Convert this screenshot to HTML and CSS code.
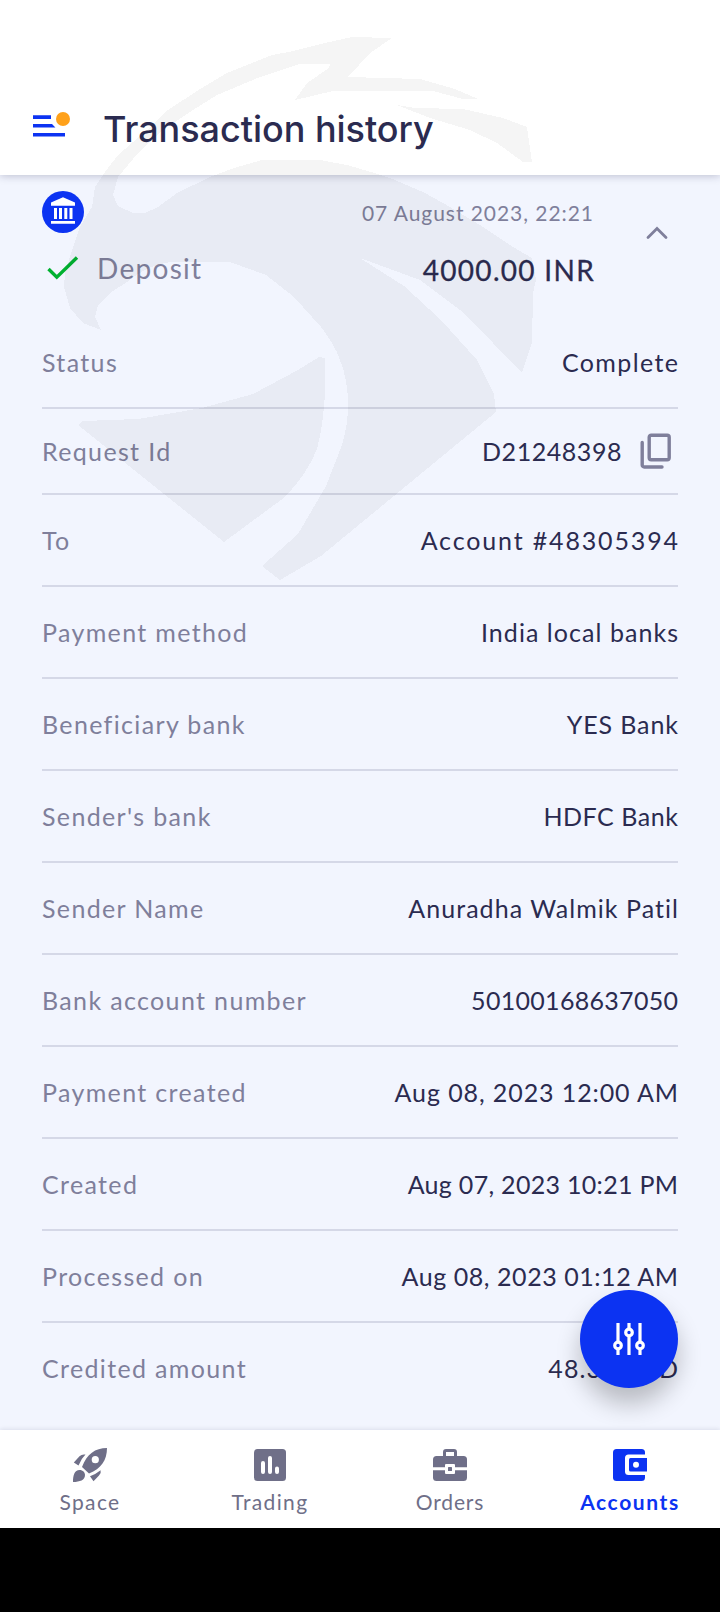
FILE: index.html
```html
<!DOCTYPE html>
<html lang="en">
<head>
<meta charset="utf-8">
<title>Transaction history</title>
<link rel="stylesheet" href="styles.css">
</head>
<body>
<div class="screen">
  <header class="header">
    <svg class="menu" width="40" height="32" viewBox="0 0 40 32">
      <path d="M0 5.300h18v3.600H0zM0 14h19l3.400 3.600H0zM0 23h32v3.600H0z" fill="#0c33f2"/>
      <circle cx="30" cy="9" r="7" fill="#ffa11a"/>
    </svg>
    <h1 class="title">Transaction history</h1>
  </header>
  <main class="content">
    <section class="summary">
      <div class="kind">
        <svg class="bank" width="42" height="42" viewBox="0 0 42 42">
          <circle cx="21" cy="21" r="21" fill="#0c33f2"/>
          <path d="M21 6.300l12 5.200v3.200H9v-3.200zM12 17h3v11h-3zM17 17h3v11h-3zM22.300 17h3v11h-3zM27.500 17h3v11h-3zM9 30h24v2.800H9z" fill="#fff"/>
        </svg>
        <div class="type">
          <svg class="check" width="32" height="24" viewBox="0 0 32 24"><path d="M1.500 13l8.300 8.200L30 1.500" fill="none" stroke="#00b130" stroke-width="3.400"/></svg>
          <span class="deposit">Deposit</span>
        </div>
      </div>
      <div class="figures">
        <span class="date">07 August 2023, 22:21</span>
        <span class="amount">4000.00 INR</span>
      </div>
      <svg class="chevron" width="22" height="14" viewBox="0 0 22 14"><path d="M2 11.500l9-9 9 9" fill="none" stroke="#7f7f9b" stroke-width="2.800" stroke-linecap="round"/></svg>
    </section>
    <dl class="details">
      <div class="row"><dt>Status</dt><dd class="loose">Complete</dd></div>
      <div class="row short"><dt>Request Id</dt><dd class="id">D21248398
        <svg class="copy" width="32" height="38" viewBox="0 0 32 38" fill="none" stroke="#7f7f9b" stroke-width="3.400" stroke-linecap="round" stroke-linejoin="round"><rect x="9.200" y="3.200" width="20" height="24.600" rx="2"/><path d="M2.200 10.500V33a2 2 0 0 0 2 2H22"/></svg></dd></div>
      <div class="row"><dt>To</dt><dd class="looser">Account #48305394</dd></div>
      <div class="row"><dt>Payment method</dt><dd class="open">India local banks</dd></div>
      <div class="row"><dt>Beneficiary bank</dt><dd class="relaxed">YES Bank</dd></div>
      <div class="row"><dt>Sender's bank</dt><dd>HDFC Bank</dd></div>
      <div class="row"><dt>Sender Name</dt><dd class="open">Anuradha Walmik Patil</dd></div>
      <div class="row"><dt>Bank account number</dt><dd class="snug">50100168637050</dd></div>
      <div class="row"><dt>Payment created</dt><dd class="relaxed">Aug 08, 2023 12:00 AM</dd></div>
      <div class="row"><dt>Created</dt><dd class="snug">Aug 07, 2023 10:21 PM</dd></div>
      <div class="row"><dt>Processed on</dt><dd>Aug 08, 2023 01:12 AM</dd></div>
      <div class="row last"><dt>Credited amount</dt><dd class="open">48.31 USD</dd></div>
    </dl>
  </main>
  <nav class="tabs">
    <a class="tab"><svg width="34" height="34" viewBox="0 0 34 34" fill="#6f6f88"><path fill-rule="evenodd" d="M34 0C22 0 14 6 9 19l7 6.500C28 21 34 12 34 0zM22.300 8.100a3.600 3.600 0 1 1 0 7.200 3.600 3.600 0 0 1 0-7.200z"/><path d="M12.500 6.600Q9 5.800 6.500 8.300L.8 14.500 5.500 17.500Q8 11 12.500 6.600zM27.600 22.200Q28.500 25 26 27.500L20.500 33.300 17 28.200Q23 26 27.600 22.200zM0 34c0-7 1.500-12 6.500-12 3.500 0 5.500 2.500 5.500 5 0 5-5 7-12 7z"/></svg><span>Space</span></a>
    <a class="tab"><svg width="34" height="34" viewBox="0 0 34 34"><rect x="1" y="1" width="32" height="32" rx="3.500" fill="#6f6f88"/><path d="M10 15v9M17 10v14M24 20.500V24" stroke="#fff" stroke-width="4" stroke-linecap="round"/></svg><span>Trading</span></a>
    <a class="tab orders"><svg width="34" height="34" viewBox="0 0 34 34"><path d="M11.500 9V4q0-1.500 1.500-1.500h8q1.500 0 1.500 1.500v5" fill="none" stroke="#6f6f88" stroke-width="3"/><rect y="8" width="34" height="25" rx="3.500" fill="#6f6f88"/><path d="M0 19.300h34v3H0z" fill="#fff"/><rect x="12" y="16" width="10" height="10" rx="1" fill="#fff"/><rect x="15" y="19" width="4" height="4" rx=".6" fill="#6f6f88"/></svg><span>Orders</span></a>
    <a class="tab active"><svg width="34" height="34" viewBox="0 0 34 34"><rect y="1" width="32" height="32" rx="3.500" fill="#0c33f2"/><path d="M34 6.500H15.500q-3.500 0-3.500 3.500v13.500q0 3.500 3.500 3.500H34z" fill="#fff"/><path d="M34 10H17.500q-1.500 0-1.500 1.500v10.500q0 1.500 1.500 1.500H34z" fill="#0c33f2"/><circle cx="23" cy="16.800" r="3" fill="#fff"/></svg><span>Accounts</span></a>
  </nav>
  <div class="system-bar"></div>

  <svg class="watermark" width="720" height="600" viewBox="0 0 720 600" shape-rendering="crispEdges">
    <path d="M392 38L352 37 325 43 289 52 272 55 227 73 197 91 168 110 147 130 118 155 105 172 95 187 92 207 80 227 73 247 65 273 64 287 70 308 83 323 101 330 95 317 98 305 110 293 127 282Q150 263 174 262H230L266 275 294 297 321 327Q335 345 340 360 348 380 348 405 348 425 342 445L326 486 298 534 262 566 280 580 321 556 496 412 494 394 477 360 441 320 404 286 360 258 420 280 460 310 493 343 522 373 532 343 533 293 536 280 532 258 513 247 483 227 450 207 425 193 395 180 378 174 347 165 320 160H262L234 168 210 177 177 193 158 207 145 213H133L118 206 113 195 118 177 138 153 163 130 193 110 217 95 260 77 300 64H330L329 68 307 83 295 100 333 91H433L463 99H478L455 89 420 79 348 77 370 53Z"/>
    <path d="M397 105L415 108 463 109 503 118 527 127 532 162H523L497 143 470 130 430 118Z"/>
    <path d="M325 358V383Q325 418 317 449 307 474 285 497L224 542 154 486 78 425 83 421 138 419 202 408 253 394 298 370 319 357Z"/>
  </svg>
  <button class="fab"><svg width="34" height="34" viewBox="0 0 34 34" fill="none" stroke="#fff" stroke-width="3.200"><path d="M6 1v18M6 26v7M17 1v5M17 14v19M28 1v18M28 26v7"/><circle cx="6" cy="23.500" r="3.300"/><circle cx="17" cy="10.500" r="3.300"/><circle cx="28" cy="23.500" r="3.300"/></svg></button>
</div>
</body>
</html>
```
FILE: styles.css
```css
* { box-sizing: border-box; }
body { margin: 0; font-family: Lato, "Open Sans", sans-serif; color: #2b2b50; }
.screen { position: relative; width: 720px; height: 1612px; overflow: hidden; display: flex; flex-direction: column; background: #f2f5fe; }
.header { height: 175px; flex: none; padding: 110px 33px 0; display: flex; align-items: flex-start; gap: 30px; background: #fff; box-shadow: 0 1px 8px rgba(30, 30, 70, .25); }
.title { margin: -4px 0 0; font-family: Inter, sans-serif; font-size: 36px; line-height: 46px; font-weight: 500; letter-spacing: -.03px; white-space: nowrap; }
.content { height: 1255px; flex: none; padding: 0 42px; }
.summary { height: 142px; display: flex; }
.kind { width: 220px; padding-top: 16px; display: flex; flex-direction: column; gap: 15px; }
.type { display: flex; align-items: center; gap: 18px; padding-left: 5px; color: #7f7f9b; }
.deposit { font-size: 28px; line-height: 40px; letter-spacing: 1.3px; }
.figures { width: 332px; padding-top: 23px; display: flex; flex-direction: column; align-items: flex-end; white-space: nowrap; }
.date { font-size: 21px; line-height: 30px; letter-spacing: .95px; color: #7f7f9b; }
.amount { font-size: 28px; line-height: 40px; margin-top: 22px; margin-right: -1px; letter-spacing: 1.3px; -webkit-text-stroke: .3px; }
.chevron { margin: 51px 0 0 52px; }
.details { margin: 0; }
.row { height: 92px; display: flex; justify-content: space-between; align-items: center; border-bottom: 2px solid #d5d8e7; font-size: 25px; white-space: nowrap; }
.short { height: 86px; }
.last { border-bottom-color: transparent; }
.row dt { color: #7f7f9b; letter-spacing: 1.35px; }
.row dd { --track: .55px; margin: 0 calc(-1 * var(--track)) 0 0; letter-spacing: var(--track); }
.row .snug { --track: .3px; }
.row .relaxed { --track: .9px; }
.row .open { --track: 1.05px; }
.row .loose { --track: 1.4px; }
.row .looser { --track: 1.85px; }
.row .id { display: flex; align-items: center; gap: 18px; margin-right: 0; padding-right: 6px; }
.tabs { height: 98px; flex: none; display: grid; grid-template-columns: repeat(4, 1fr); background: #fff; box-shadow: 0 -1px 4px rgba(30, 30, 70, .1); }
.tab { padding-top: 18px; display: flex; flex-direction: column; align-items: center; font-size: 21px; line-height: 30px; gap: 5px; letter-spacing: 1.35px; color: #6f6f88; }
.orders { letter-spacing: .85px; }
.active { color: #0c33f2; font-weight: 700; letter-spacing: 1.6px; }
.system-bar { flex: 1; background: #000; }
.watermark { position: absolute; left: 0; top: 0; fill: #000; opacity: .036; pointer-events: none; }
.fab { position: absolute; left: 580px; top: 1290px; width: 98px; height: 98px; padding: 0; border: 0; border-radius: 50%; display: grid; place-items: center; background: #0c33f2; box-shadow: 0 16px 24px rgba(0, 0, 0, .24); }
```
